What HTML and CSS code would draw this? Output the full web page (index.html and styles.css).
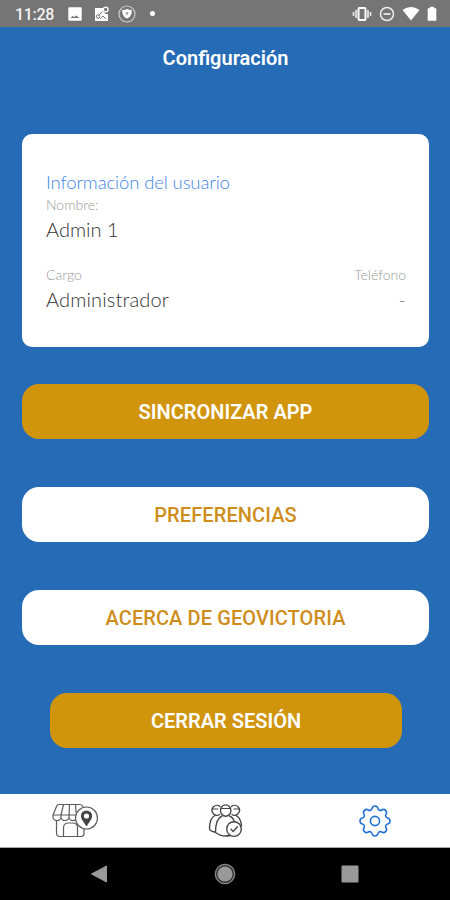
FILE: index.html
```html
<!DOCTYPE html>
<html lang="es">

<head>
    <meta charset="UTF-8">
    <meta name="viewport" content="width=device-width, initial-scale=1.0">
    <title>Configuración</title>
    <link rel="stylesheet" href="styles.css">
</head>

<body>
    <div class="estado">
        <span class="hora">11:28</span>
        <svg class="ic-imagen" width="14" height="14" viewBox="0 0 14 14">
            <rect x="0.3" y="0.3" width="13.4" height="13.4" rx="1" fill="#fff" />
            <path d="M2.5 11l2-2 1.800 1 2.200-1.500 2.800 2.500z" fill="#757575" />
        </svg>
        <svg class="ic-foto" width="15" height="16" viewBox="0 0 15 16">
            <path d="M1 2h8v3.5l3 2.5h2v7H1z" fill="#fff" />
            <circle cx="11.7" cy="3.5" r="2.4" fill="#757575" stroke="#fff" stroke-width="1.3" />
            <circle cx="4" cy="10.5" r="1.7" fill="none" stroke="#757575" />
            <path d="M5 9l3.5-3.5M6 13l3-3 3 3" fill="none" stroke="#757575" />
        </svg>
        <svg class="ic-escudo" width="18" height="18" viewBox="0 0 18 18">
            <circle cx="9" cy="9" r="8" fill="none" stroke="#cfcfcf" stroke-width="1.2" />
            <path d="M9 4q2 1 4.800 1c.3 4-1.300 7-4.800 8.600-3.500-1.600-5.100-4.600-4.800-8.600Q7 5 9 4z" fill="#fff" />
            <path d="M7.700 7h2.600v1.800L9 10.500 7.700 8.800z" fill="#aaa" />
        </svg>
        <span class="punto"></span>
        <div class="estado-der">
            <svg width="20" height="16" viewBox="0 0 20 16">
                <path d="M1.500 6v4M18.500 6v4M4 4v8M16 4v8" stroke="#e4e4e4" stroke-width="1.7" />
                <rect x="6.500" y="2" width="7" height="12" rx="1" fill="#757575" stroke="#fff" stroke-width="2" />
            </svg>
            <svg width="16" height="16" viewBox="0 0 16 16">
                <circle cx="8" cy="8" r="6.500" fill="none" stroke="#eee" stroke-width="1.5" />
                <path d="M4.500 8h7" stroke="#eee" stroke-width="1.7" />
            </svg>
            <svg width="18" height="16" viewBox="0 0 18 16">
                <path d="M0.500 4Q9-2 17.500 4L9 14.500z" fill="#fff" />
            </svg>
            <svg width="10" height="16" viewBox="0 0 10 16">
                <path d="M3 .8h4v1.400h2.300v12.600H.7V2.200H3z" fill="#fff" />
            </svg>
        </div>
    </div>

    <h1>Configuración</h1>

    <main>
        <div class="tarjeta">
            <h2>Información del usuario</h2>
            <div class="campo">
                <label>Nombre:</label>
                <p>Admin 1</p>
            </div>
            <div class="fila">
                <div class="campo">
                    <label>Cargo</label>
                    <p class="cargo">Administrador</p>
                </div>
                <div class="campo derecha">
                    <label>Teléfono</label>
                    <p>-</p>
                </div>
            </div>
        </div>

        <button class="naranja">SINCRONIZAR APP</button>
        <button class="blanco">PREFERENCIAS</button>
        <button class="blanco">ACERCA DE GEOVICTORIA</button>
        <button class="naranja cerrar">CERRAR SESIÓN</button>
    </main>

    <div class="tabs">
        <div class="tab">
            <svg width="48" height="38" viewBox="0 0 48 38" fill="none" stroke="#5c5c5c" stroke-width="1.2" stroke-linejoin="round">
                <path d="M8 2.500h21q2 0 3 2.500M8 2.500q-2 0-2.500 2L2 13v2a4 3.500 0 0 0 8 0 4 3.500 0 0 0 8 0 4 3.500 0 0 0 8 0M2 13h23M12.500 2.500L10 13v2M18.500 2.500L18 15M24.500 2.500l.5 8" />
                <path d="M5.500 18v13q0 3.500 3.500 3.500h21q3 0 3-3V27M12.500 34.500V26q0-5 5-5h4q5 0 5 5v8.500" />
                <circle cx="35.500" cy="16" r="11" fill="#fff" />
                <path d="M35.500 23.500c-1.500-3.500-5-5.500-5-9.500a5 5 0 0 1 10 0c0 4-3.500 6-5 9.500z" fill="#444" stroke="#444" />
                <circle cx="35.500" cy="14" r="2.600" fill="#fff" stroke="none" />
            </svg>
        </div>
        <div class="tab">
            <svg width="36" height="38" viewBox="0 0 36 38" fill="none" stroke="#444" stroke-width="1.35" stroke-linecap="round">
                <path d="M12.500 12.500A4.800 5 0 1 1 13 4.500M24.500 4.500A4.800 5 0 1 1 25 12.500" />
                <path d="M8 13.500c-4 2-5.500 8-5.500 13q0 2.500 5 3.500M29 13.500c3 1.500 5 5 5.500 10" />
                <ellipse cx="18.700" cy="8.500" rx="5.200" ry="5.700" fill="#fff" />
                <path d="M15 14c-5 2-6.500 9-6.500 16.500 4 3 10 4 14.500 3M22.500 14c2.500 1 4 3 5 6" />
                <path d="M14 6.500h9.500M5.500 7h5.500M27 7h5" stroke-width="1" />
                <circle cx="27" cy="27" r="7.300" fill="#fff" />
                <path d="M24 27.300l2.200 2.200 4.200-4.700" />
            </svg>
        </div>
        <div class="tab">
            <svg width="34" height="34" viewBox="0 0 34 34" fill="none" stroke="#2070d4" stroke-width="1.6">
                <path d="M14.080 4.330A3 3 0 0 1 19.920 4.330A2.600 2.600 0 0 0 23.890 5.980A3 3 0 0 1 28.020 10.110A2.600 2.600 0 0 0 29.670 14.080A3 3 0 0 1 29.670 19.920A2.600 2.600 0 0 0 28.020 23.890A3 3 0 0 1 23.890 28.020A2.600 2.600 0 0 0 19.920 29.670A3 3 0 0 1 14.080 29.670A2.600 2.600 0 0 0 10.110 28.020A3 3 0 0 1 5.980 23.890A2.600 2.600 0 0 0 4.330 19.920A3 3 0 0 1 4.330 14.080A2.600 2.600 0 0 0 5.980 10.110A3 3 0 0 1 10.110 5.980A2.600 2.600 0 0 0 14.080 4.330z" />
                <circle cx="17" cy="17" r="4.600" />
            </svg>
        </div>
    </div>

    <div class="navegacion">
        <svg width="18" height="20" viewBox="0 0 18 20">
            <path d="M1.500 10L16.500 2v16z" fill="#999" stroke="#999" stroke-linejoin="round" />
        </svg>
        <svg width="22" height="22" viewBox="0 0 22 22">
            <circle cx="11" cy="11" r="9.700" fill="#333" stroke="#888" stroke-width="1.3" />
            <circle cx="11" cy="11" r="7.600" fill="#999" />
        </svg>
        <svg width="18" height="18" viewBox="0 0 18 18">
            <rect x="0.500" y="0.500" width="17" height="17" rx="1" fill="#999" />
        </svg>
    </div>
</body>

</html>
```

FILE: styles.css
```css
* {
    box-sizing: border-box;
}

body {
    margin: 0;
    height: 900px;
    display: flex;
    flex-direction: column;
    background-color: #266bb5;
    font-family: Roboto, Arial, sans-serif;
}

svg {
    display: block;
    flex-shrink: 0;
}

.estado {
    display: flex;
    align-items: center;
    height: 27px;
    padding: 0 13px 0 15px;
    background-color: #757575;
    color: #f4f4f4;
}

.hora {
    width: 53px;
    font-size: 16px;
    font-weight: 500;
    line-height: 27px;
    letter-spacing: -0.3px;
    padding-top: 1px;
}

.ic-foto {
    margin-left: 12px;
}

.ic-escudo {
    margin-left: 9px;
}

.punto {
    width: 5px;
    height: 5px;
    margin-left: 14px;
    border-radius: 50%;
    background-color: #fff;
}

.estado-der {
    display: flex;
    align-items: center;
    gap: 7px;
    margin-left: auto;
}

h1 {
    margin: 0;
    height: 63px;
    padding-left: 1px;
    color: #fff;
    font-size: 20px;
    font-weight: 600;
    line-height: 63px;
    text-align: center;
}

main {
    flex: 1;
    display: flex;
    flex-direction: column;
    padding: 44px 21px 0 22px;
}

.tarjeta {
    height: 213px;
    margin-bottom: 37px;
    padding: 36px 23px 0 24px;
    border-radius: 10px;
    background-color: #fff;
    font-family: Lato, sans-serif;
    font-weight: 300;
}

.tarjeta h2 {
    margin: 0;
    color: #4285e8;
    font-size: 18.5px;
    font-weight: 300;
    line-height: 25px;
    letter-spacing: -0.13px;
}

.campo label {
    display: block;
    color: #999;
    font-size: 14px;
    line-height: 20px;
}

.campo p {
    margin: 0;
    color: #333;
    font-size: 20px;
    line-height: 29px;
}

.campo .cargo {
    letter-spacing: 0.15px;
}

.fila {
    display: flex;
    justify-content: space-between;
    margin-top: 21px;
}

.derecha {
    text-align: right;
}

.derecha p {
    color: #888;
}

button {
    height: 55px;
    margin: 0 0 48px;
    padding: 0;
    border: none;
    border-radius: 17px;
    font-family: inherit;
    font-size: 20px;
    font-weight: 600;
}

.naranja {
    background-color: #d1940d;
    color: #fff;
}

.blanco {
    background-color: #fff;
    color: #ce8d1b;
    font-weight: 500;
    letter-spacing: 0.1px;
}

.cerrar {
    margin: 0 27px 0 28px;
}

.tabs {
    display: grid;
    grid-template-columns: repeat(3, 1fr);
    height: 54px;
    background-color: #fff;
    border-bottom: 1px solid #aaa;
}

.tab {
    display: flex;
    align-items: center;
    justify-content: center;
}

.navegacion {
    display: flex;
    align-items: center;
    justify-content: space-between;
    height: 52px;
    padding: 0 91px 0 90px;
    background-color: #000;
}
```
